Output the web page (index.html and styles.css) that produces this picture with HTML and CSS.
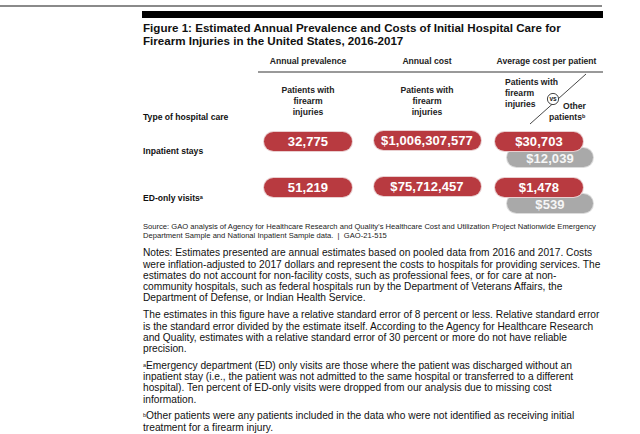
FILE: index.html
```html
<!DOCTYPE html>
<html>
<head>
<meta charset="utf-8">
<link rel="stylesheet" href="styles.css">
</head>
<body>
<div class="topline"></div>
<div class="figure">
  <div class="blackbar"></div>
  <h1 class="title">Figure 1: Estimated Annual Prevalence and Costs of Initial Hospital Care for<br>Firearm Injuries in the United States, 2016-2017</h1>

  <div class="chart">
    <div class="hdr-blank"></div>
    <div class="hdr">Annual prevalence</div>
    <div class="hdr">Annual cost</div>
    <div class="hdr hdr3">Average cost per patient</div>
    <div class="rule"></div>

    <div class="typelabel">Type of hospital care</div>
    <div class="sub">Patients with<br>firearm<br>injuries</div>
    <div class="sub">Patients with<br>firearm<br>injuries</div>
    <div class="sub3">
      <svg class="vs" width="107" height="50" viewBox="0 0 107 50">
        <line x1="34" y1="47" x2="90" y2="-3" stroke="#333" stroke-width="0.9"/>
        <circle cx="57" cy="22" r="5.6" fill="#fff" stroke="#333" stroke-width="0.9"/>
        <text x="57" y="24.3" text-anchor="middle" class="vs-t">vs</text>
      </svg>
      <div class="sub3-a">Patients with<br>firearm<br>injuries</div>
      <div class="sub3-other">Other</div>
      <div class="sub3-pts">patients<sup>b</sup></div>
    </div>

    <div class="rowlabel r1">Inpatient stays</div>
    <div class="cell r1"><span class="pill red">32,775</span></div>
    <div class="cell r1"><span class="pill red wide">$1,006,307,577</span></div>
    <div class="cell3 r1">
      <span class="pill red p3">$30,703</span>
      <span class="pill gray g3">$12,039</span>
    </div>

    <div class="rowlabel r2">ED-only visits<sup>a</sup></div>
    <div class="cell r2"><span class="pill red">51,219</span></div>
    <div class="cell r2"><span class="pill red wide">$75,712,457</span></div>
    <div class="cell3 r2">
      <span class="pill red p3">$1,478</span>
      <span class="pill gray g3">$539</span>
    </div>
  </div>

  <p class="source">Source: GAO analysis of Agency for Healthcare Research and Quality’s Healthcare Cost and Utilization Project Nationwide Emergency Department Sample and National Inpatient Sample data. &nbsp;|&nbsp; GAO-21-515</p>

  <p class="note first">Notes: Estimates presented are annual estimates based on pooled data from 2016 and 2017. Costs were inflation-adjusted to 2017 dollars and represent the costs to hospitals for providing services. The estimates do not account for non-facility costs, such as professional fees, or for care at non-community hospitals, such as federal hospitals run by the Department of Veterans Affairs, the Department of Defense, or Indian Health Service.</p>
  <p class="note">The estimates in this figure have a relative standard error of 8 percent or less. Relative standard error is the standard error divided by the estimate itself. According to the Agency for Healthcare Research and Quality, estimates with a relative standard error of 30 percent or more do not have reliable precision.</p>
  <p class="note"><sup>a</sup>Emergency department (ED) only visits are those where the patient was discharged without an inpatient stay (i.e., the patient was not admitted to the same hospital or transferred to a different hospital). Ten percent of ED-only visits were dropped from our analysis due to missing cost information.</p>
  <p class="note"><sup>b</sup>Other patients were any patients included in the data who were not identified as receiving initial treatment for a firearm injury.</p>
</div>
</body>
</html>
```

FILE: styles.css
```css
* { box-sizing: border-box; }
html, body { margin: 0; padding: 0; background: #fff; }
body {
  font-family: "Liberation Sans", Arial, sans-serif;
  color: #111;
  width: 640px;
  height: 434px;
  overflow: hidden;
}
.topline {
  margin-top: 5px;
  width: 602px;
  height: 2px;
  background: #8a8a8a;
}
.figure {
  margin-left: 142px;
  width: 461px;
}
.blackbar {
  margin-top: 4px;
  height: 7px;
  background: #000;
}
.title {
  margin: 3px 0 0 1px;
  font-size: 11.6px;
  line-height: 13px;
  font-weight: bold;
}
.chart {
  display: grid;
  grid-template-columns: 116px 100px 138px 107px;
  margin-top: 9px;
}
.hdr {
  font-size: 8.6px;
  font-weight: bold;
  text-align: center;
  line-height: 11px;
  color: #222;
}
.hdr3 { padding-right: 6px; }
.rule {
  grid-column: 2 / 5;
  height: 2px;
  background: #999;
  margin-top: 4px;
}
.typelabel {
  align-self: end;
  font-size: 8.6px;
  font-weight: bold;
  padding-left: 1px;
  line-height: 11px;
}
.sub {
  font-size: 8.6px;
  font-weight: bold;
  text-align: center;
  line-height: 11px;
  margin-top: 12px;
  color: #222;
}
.sub3 {
  position: relative;
  height: 46px;
  margin-top: 4px;
  font-size: 8.6px;
  font-weight: bold;
  line-height: 11px;
  color: #222;
}
.sub3-a { position: relative; margin-left: 9px; }
.sub3-other {
  position: absolute;
  left: 67px;
  top: 24px;
}
.sub3-pts {
  position: absolute;
  left: 53px;
  top: 35px;
}
sup { font-size: 5.5px; vertical-align: 2px; line-height: 0; }
.vs {
  position: absolute;
  left: 0;
  top: 0;
  overflow: visible;
}
.vs-t { font-size: 6.5px; font-weight: bold; font-family: "Liberation Sans", Arial, sans-serif; fill: #222; }
.rowlabel {
  font-size: 8.6px;
  font-weight: bold;
  padding-left: 1px;
  align-self: start;
}
.rowlabel.r1 { margin-top: 23px; }
.rowlabel.r2 { margin-top: 15px; }
.cell { display: flex; justify-content: center; }
.cell.r1 { margin-top: 9px; height: 46px; }
.cell3 { display: flex; flex-direction: column; }
.cell3.r1 { margin-top: 9px; }
.pill {
  display: flex;
  align-items: center;
  justify-content: center;
  width: 88px;
  height: 19px;
  border-radius: 10px;
  color: #fff;
  font-weight: bold;
  font-size: 13px;
  letter-spacing: 0.1px;
  box-shadow: 0 0 0 1px #e9cfd0;
}
.red { background: #b83a40; position: relative; z-index: 2; }
.gray { background: #a9a9a9; box-shadow: 0 0 0 1px #dcdcdc; color: #f6f6f6; }
.wide { width: 107px; margin-top: -1px; }
.p3 { margin-left: -1px; }
.g3 { margin-left: 11px; margin-top: -3px; width: 86px; padding-top: 2px; }
.source {
  margin: 10px 0 0 1px;
  font-size: 7.6px;
  line-height: 8.7px;
  color: #222;
}
.note {
  margin: 5.6px 0 0 1px;
  font-size: 10.2px;
  line-height: 11.25px;
  color: #111;
}
.note.first { margin-top: 7px; }
```
